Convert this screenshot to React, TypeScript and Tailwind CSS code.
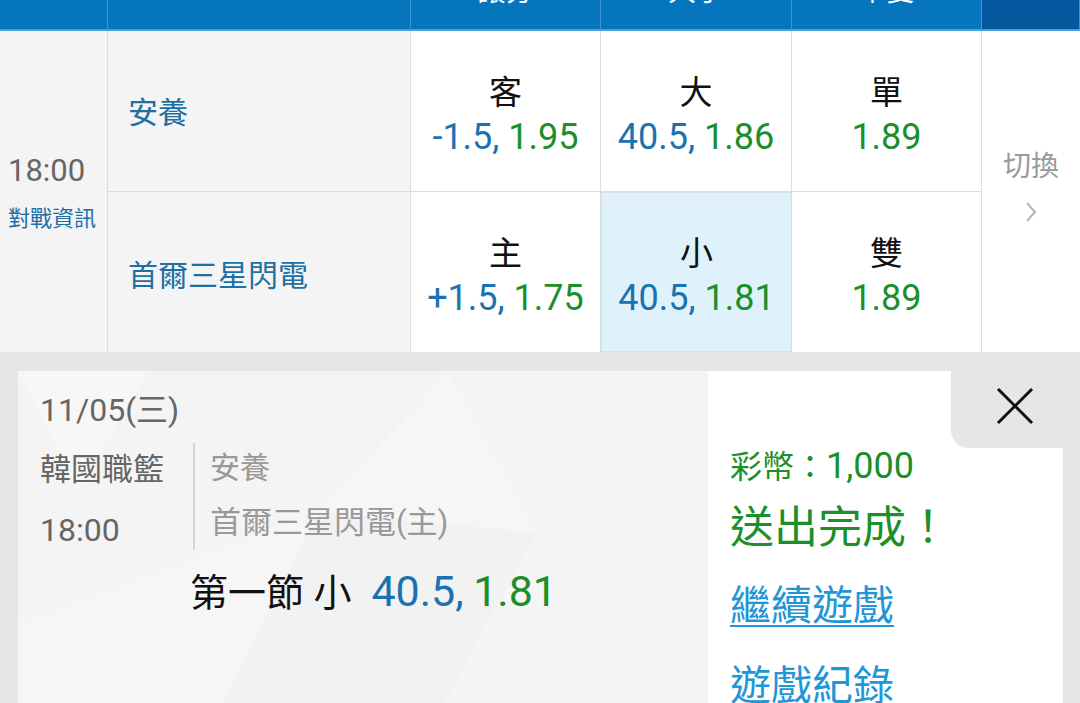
import React from "react";

const FONT = { fontFamily: "Roboto, 'Noto Sans CJK TC', 'Noto Sans', sans-serif" };

type Odd = { label: string; line?: string; price: string; picked?: boolean; top?: boolean };

function OddCell({ label, line, price, picked, top }: Odd) {
  return (
    <div
      className={
        "flex flex-col items-center justify-center pt-[8px] border-r border-[#d9dee3] " +
        (top ? "border-b " : "") +
        (picked ? "bg-[#dff1fb] border border-[#b5d3e2]" : "bg-white")
      }
    >
      <span className="text-[33px] leading-[44px] text-[#111]">{label}</span>
      <span className="text-[36px] leading-[44px]">
        {line && <span className="text-[#1b72b0]">{line}, </span>}
        <span className="text-[#1a8f2a]">{price}</span>
      </span>
    </div>
  );
}

function HeadCell({ text, dark }: { text: string; dark?: boolean }) {
  return (
    <div
      className={
        "flex justify-center overflow-hidden border-r border-[#3d95d0] border-b-2 border-b-[#4aa0d8] " +
        (dark ? "bg-[#05589d]" : "bg-[#0575bd]")
      }
    >
      <span className="mt-[-22px] text-[28px] leading-[28px] text-white">{text}</span>
    </div>
  );
}

export default function App() {
  return (
    <div className="h-[703px] w-[1080px] overflow-hidden flex flex-col bg-[#e6e6e6]" style={FONT}>
      {/* odds table */}
      <div className="grid grid-cols-[108px_303px_190px_191px_190px_98px] grid-rows-[31px_161px_160px]">
        <HeadCell text="" />
        <HeadCell text="" />
        <HeadCell text="讓分" />
        <HeadCell text="大小" />
        <HeadCell text="單雙" />
        <HeadCell text="" dark />

        <div className="row-span-2 flex flex-col justify-center pl-[8px] pt-[3px] bg-[#f4f4f4] border-r border-[#d9dee3]">
          <span className="text-[31px] leading-[40px] text-[#666]">18:00</span>
          <span className="mt-[12px] text-[22px] leading-[32px] text-[#1e6fa3]">對戰資訊</span>
        </div>
        <div className="flex items-center pl-[20px] pt-[2px] bg-[#f4f4f4] border-r border-b border-[#d9dee3]">
          <span className="text-[30px] text-[#1e6fa3]">安養</span>
        </div>
        <OddCell label="客" line="-1.5" price="1.95" top />
        <OddCell label="大" line="40.5" price="1.86" top />
        <OddCell label="單" price="1.89" top />
        <div className="row-span-2 flex flex-col items-center justify-center pb-[12px] bg-white">
          <span className="text-[28px] leading-[40px] text-[#9a9a9a]">切換</span>
          <svg width="14" height="24" viewBox="0 0 14 24" className="mt-[13px]">
            <path d="M3 3 L11 12 L3 21" fill="none" stroke="#b3b3b3" strokeWidth="2" />
          </svg>
        </div>

        <div className="flex items-center pl-[20px] pt-[6px] bg-[#f4f4f4] border-r border-[#d9dee3]">
          <span className="text-[30px] text-[#1e6fa3]">首爾三星閃電</span>
        </div>
        <OddCell label="主" line="+1.5" price="1.75" />
        <OddCell label="小" line="40.5" price="1.81" picked />
        <OddCell label="雙" price="1.89" />
      </div>

      {/* bet confirmation */}
      <div className="flex flex-1 pt-[19px] pl-[18px] pr-[17px]">
        <div className="relative flex-1 bg-[#f4f4f4] overflow-hidden">
          <svg className="absolute inset-0 h-full w-full" viewBox="0 0 690 340" preserveAspectRatio="none">
            <polygon points="0,0 130,0 60,120" fill="#f7f7f7" />
            <polygon points="130,0 430,0 300,140" fill="#f3f3f3" />
            <polygon points="300,140 430,0 520,160" fill="#f6f6f6" />
            <polygon points="430,0 690,0 690,160 520,160" fill="#f4f4f4" />
            <polygon points="0,120 60,120 300,140 0,250" fill="#f4f4f4" />
            <polygon points="300,140 520,160 420,340 200,340" fill="#f2f2f2" />
            <polygon points="520,160 690,160 690,340 420,340" fill="#f5f5f5" />
            <polygon points="0,250 300,140 200,340 0,340" fill="#f6f6f6" />
          </svg>
          <div className="relative flex flex-col pl-[22px] pt-[19px]">
            <span className="text-[32px] leading-[40px] text-[#666]">11/05(三)</span>
            <div className="mt-[13px] flex pt-[7px]">
              <div className="flex w-[153px] flex-col gap-[20px]">
                <span className="text-[31px] leading-[40px] text-[#666]">韓國職籃</span>
                <span className="text-[32px] leading-[40px] text-[#666]">18:00</span>
              </div>
              <div className="mt-[-7px] w-[2px] bg-[#d6d6d6]" />
              <div className="ml-[15px] mt-[-2px] flex flex-col gap-[15px]">
                <span className="text-[30px] leading-[40px] text-[#999]">安養</span>
                <span className="text-[31px] leading-[40px] text-[#999]">首爾三星閃電(主)</span>
              </div>
            </div>
            <div className="ml-[150px] mt-[15px] text-[38px] leading-[52px] text-[#111]">
              第一節 小
              <span className="ml-[20px] text-[43px] text-[#1b72b0]">40.5,</span>{" "}
              <span className="text-[43px] text-[#1a8f2a]">1.81</span>
            </div>
          </div>
        </div>

        <div className="relative flex w-[355px] flex-col bg-white pl-[22px] pt-[73px]">
          <button className="absolute right-0 top-0 flex h-[77px] w-[112px] items-start justify-start rounded-bl-[18px] bg-[#e6e6e6] pl-[45px] pt-[16px]">
            <svg width="38" height="38" viewBox="0 0 38 38">
              <path d="M2 2 L36 36 M36 2 L2 36" stroke="#111" strokeWidth="3" />
            </svg>
          </button>
          <span className="text-[32px] leading-[44px] text-[#1a8f2a]">
            彩幣：<span className="text-[36px]">1,000</span>
          </span>
          <span className="mt-[11px] text-[44px] leading-[56px] text-[#1a8f2a]">送出完成！</span>
          <a className="mt-[22px] text-[41px] leading-[56px] text-[#1e96d8] underline decoration-2 underline-offset-[5px]">
            繼續遊戲
          </a>
          <a className="mt-[24px] text-[41px] leading-[56px] text-[#1e96d8] underline decoration-2 underline-offset-[5px]">
            遊戲紀錄
          </a>
        </div>
      </div>
    </div>
  );
}
